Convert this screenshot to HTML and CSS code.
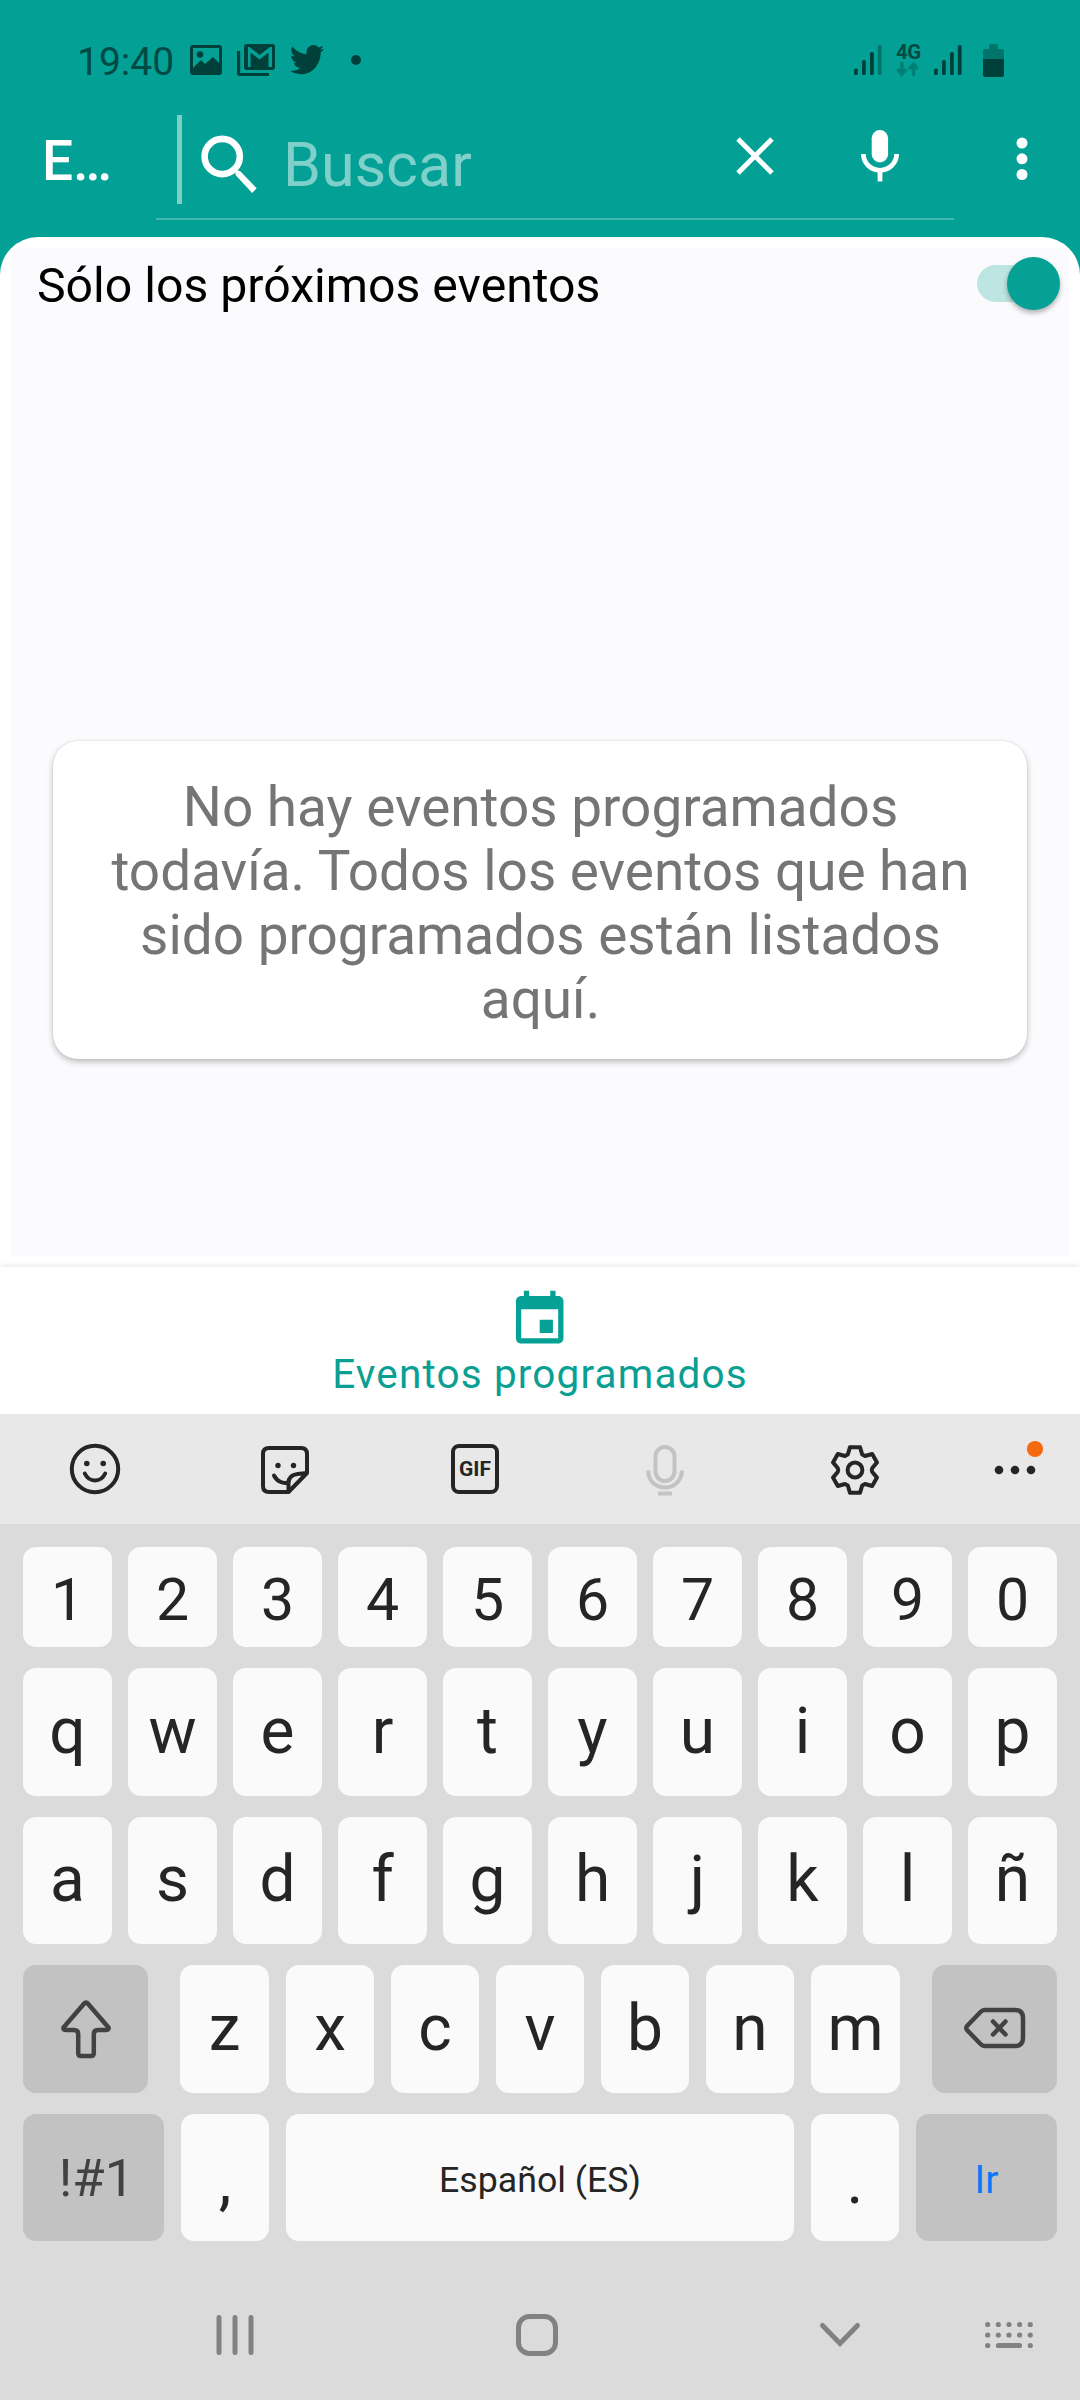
FILE: index.html
```html
<!DOCTYPE html>
<html lang="es">
<head>
<meta charset="utf-8">
<title>Eventos programados</title>
<link rel="stylesheet" href="styles.css">
</head>
<body>
<header class="header">
  <div class="status">
    <span class="clock">19:40</span>
    <svg class="st-image" width="32" height="30" viewBox="0 0 32 30"><path fill-rule="evenodd" d="M3 0h26a3 3 0 0 1 3 3v24a3 3 0 0 1-3 3H3a3 3 0 0 1-3-3V3a3 3 0 0 1 3-3zM3 3v20l8-8 4 4 8-7 6 6V3z"/><circle cx="10" cy="9.500" r="3.300"/></svg>
    <svg class="st-mail" width="38" height="32" viewBox="0 0 38 32"><path fill-rule="evenodd" d="M10 0h25a3 3 0 0 1 3 3v20a3 3 0 0 1-3 3H10a3 3 0 0 1-3-3V3a3 3 0 0 1 3-3zM11 3v20h2.500V8.500l9 7 9-7V23H35V3h-2l-10.500 8L12.500 3z"/><path d="M0 7h3.200v22H32v3H3a3 3 0 0 1-3-3z"/></svg>
    <svg class="st-bird" width="34" height="29" viewBox="0 2.800 24 19.500" preserveAspectRatio="none"><path d="M23.950 4.570a10 10 0 0 1-2.820.770 4.960 4.960 0 0 0 2.160-2.720c-.950.550-2 .960-3.130 1.180a4.920 4.920 0 0 0-8.380 4.480C7.690 8.100 4.070 6.130 1.640 3.160a4.920 4.920 0 0 0 1.520 6.570 4.900 4.900 0 0 1-2.230-.610v.060a4.920 4.920 0 0 0 3.950 4.830 5 5 0 0 1-2.210.080 4.940 4.940 0 0 0 4.600 3.420A9.870 9.870 0 0 1 0 19.540a14 14 0 0 0 7.550 2.210c9.050 0 14-7.500 14-13.980 0-.210 0-.420-.020-.630a9.900 9.900 0 0 0 2.460-2.550z"/></svg>
    <svg class="st-dot" width="10" height="10"><circle cx="5" cy="5" r="5"/></svg>
    <span class="spacer"></span>
    <svg class="st-signal" width="28" height="30" viewBox="0 0 28 30"><rect y="23.500" width="3.800" height="6.500" rx="1.500"/><rect x="8" y="15" width="3.800" height="15" rx="1.500"/><rect x="16" y="7" width="3.800" height="23" rx="1.500"/><rect class="faint" x="23.800" width="3.800" height="30" rx="1.500"/></svg>
    <span class="network"><b>4G</b><svg width="24" height="15" viewBox="0 0 24 15"><path d="M5.800 0v11M1.500 7l4.300 5.300L10.100 7M17.500 14V2.500M13.200 7l4.300-5 4.300 5" fill="none" stroke-width="3.400"/></svg></span>
    <svg class="st-signal2" width="28" height="30" viewBox="0 0 28 30"><rect y="23.500" width="3.800" height="6.500" rx="1.500"/><rect x="8" y="15" width="3.800" height="15" rx="1.500"/><rect x="16" y="7" width="3.800" height="23" rx="1.500"/><rect x="23.800" width="3.800" height="30" rx="1.500"/></svg>
    <svg class="st-battery" width="21" height="33" viewBox="0 0 21 33"><path class="faint" d="M6 5V2q0-2 2-2h5q2 0 2 2v3h4q2 0 2 2v8H0V7q0-2 2-2z"/><path d="M0 15h21v16q0 2-2 2H2q-2 0-2-2z"/></svg>
  </div>
  <div class="appbar">
    <h1 class="title">E…</h1>
    <div class="search">
      <span class="divider"></span>
      <svg class="magnifier" width="57" height="58" viewBox="0 0 57 58"><circle cx="21.200" cy="21.500" r="17.600" fill="none" stroke="#fff" stroke-width="6.600"/><path d="M34.500 37.500v-2.200L39 36l16.700 17.300-4.500 4.600L34.500 40z" fill="#fff"/></svg>
      <span class="placeholder">Buscar</span>
      <svg class="clear" width="38" height="38" viewBox="0 0 38 38"><path d="M2 2l34 34M36 2L2 36" stroke="#fff" stroke-width="5"/></svg>
      <svg class="voice" width="38" height="52" viewBox="0 0 38 52"><rect x="10.700" y="0" width="16.400" height="32.500" rx="8.200" fill="#fff"/><path d="M2.400 24a16.500 16.200 0 0 0 33.200 0M19 39v12.500" fill="none" stroke="#fff" stroke-width="4.800"/></svg>
    </div>
    <svg class="overflow" width="12" height="44"><circle cx="6" cy="6" r="5.500" fill="#fff"/><circle cx="6" cy="21.800" r="5.500" fill="#fff"/><circle cx="6" cy="37.500" r="5.500" fill="#fff"/></svg>
  </div>
</header>
<main class="sheet">
  <div class="content">
    <div class="filter"><span>Sólo los próximos eventos</span><span class="switch"><i class="thumb"></i></span></div>
    <p class="card">No hay eventos programados todavía. Todos los eventos que han sido programados están listados aquí.</p>
  </div>
</main>
<nav class="tab">
  <svg width="63.400" height="63.400" viewBox="0 0 24 24" fill="#05a195"><path d="M17 12h-5v5h5v-5zM16 1v2H8V1H6v2H5c-1.110 0-1.990.9-1.990 2L3 19c0 1.100.890 2 2 2h14c1.100 0 2-.9 2-2V5c0-1.100-.9-2-2-2h-1V1h-2zm3 18H5V8h14v11z"/></svg>
  <span>Eventos programados</span>
</nav>
<section class="keyboard">
  <div class="tools">
    <svg width="52" height="52" viewBox="-26 -26 52 52"><g class="ln"><circle r="23.200"/><path d="M-10.200 4.500c4.500 9.300 15.900 9.300 20.400 0"/></g><circle cx="-8.200" cy="-5.500" r="2.800"/><circle cx="8.200" cy="-5.500" r="2.800"/></svg>
    <svg width="52" height="52" viewBox="0 0 52 52"><path class="ln" d="M29.500 48H10q-6 0-6-6V10q0-6 6-6h32q6 0 6 6v19L29.500 48V39q0-8 9-9l9.500-1M15 31.500c3 6 9 8.500 14 7"/><circle cx="19" cy="21.500" r="2.700"/><circle cx="34.500" cy="21.500" r="2.700"/></svg>
    <span class="gif">GIF</span>
    <svg width="52" height="52" viewBox="0 0 52 52"><g class="muted"><rect x="16.500" y="3" width="19" height="34" rx="9.500"/><path d="M9.200 26.500c0 22.500 33.600 22.500 33.600 0M19 49.500h14"/></g></svg>
    <svg width="52" height="52" viewBox="-26 -26 52 52"><path class="ln" d="M-5 -22.800H5L7.200 -15.500L10 -14L17.200 -16L22 -7.600L17.300 -2Q16.200 0 17.300 2L22 7.600L17.200 16L10 14L7.200 15.500L5 22.800H-5L-7.200 15.500L-10 14L-17.200 16L-22 7.600L-17.300 2Q-16.200 0 -17.300 -2L-22 -7.600L-17.200 -16L-10 -14L-7.200 -15.500Z"/><circle class="ln" r="7.400"/></svg>
    <svg class="more" width="52" height="52" viewBox="0 0 52 52"><circle cx="10" cy="26" r="4.300"/><circle cx="26" cy="26" r="4.300"/><circle cx="42" cy="26" r="4.300"/><circle cx="46" cy="5" r="8.100" fill="#f56a0f"/></svg>
  </div>
  <div class="keys">
    <div class="row digits"><b>1</b><b>2</b><b>3</b><b>4</b><b>5</b><b>6</b><b>7</b><b>8</b><b>9</b><b>0</b></div>
    <div class="row"><b>q</b><b>w</b><b>e</b><b>r</b><b>t</b><b>y</b><b>u</b><b>i</b><b>o</b><b>p</b></div>
    <div class="row"><b>a</b><b>s</b><b>d</b><b>f</b><b>g</b><b>h</b><b>j</b><b>k</b><b>l</b><b>ñ</b></div>
    <div class="row shift-row">
      <b class="dark shift"><svg width="52" height="60" viewBox="0 0 52 60"><path class="kl" d="M26 3.500Q27 3.500 28 4.700L48.500 28.500Q49 31 46.500 31H38Q33.800 31 33.800 35V54Q33.800 57 31 57H21Q18.200 57 18.200 54V35Q18.200 31 14 31H5.500Q3 31 3.500 28.500L24 4.700Q25 3.500 26 3.500Z"/></svg></b>
      <b>z</b><b>x</b><b>c</b><b>v</b><b>b</b><b>n</b><b>m</b>
      <b class="dark erase"><svg width="62" height="42" viewBox="0 0 62 42"><path class="kl" d="M20.500 3H51Q59 3 59 11V31Q59 39 51 39H20.500Q18.500 39 16.500 37L3 23Q1.500 21 3 19L16.500 5Q18.500 3 20.500 3ZM29 14.500L41.500 27.500M41.500 14.500L29 27.500"/></svg></b>
    </div>
    <div class="row bottom-row"><b class="dark sym">!#1</b><b class="punct">,</b><b class="space">Español (ES)</b><b class="punct">.</b><b class="dark go">Ir</b></div>
  </div>
  <div class="sysnav">
    <svg width="40" height="42" viewBox="0 0 40 42"><path d="M4 3.500v35M20 3.500v35M36 3.500v35" stroke="#828282" stroke-width="5" stroke-linecap="round"/></svg>
    <svg width="44" height="44" viewBox="0 0 44 44"><rect x="3.500" y="3.500" width="37" height="37" rx="11" fill="none" stroke="#828282" stroke-width="5"/></svg>
    <svg width="42" height="26" viewBox="0 0 42 26"><path d="M3.500 3.500L21 21.500 38.500 3.500" fill="none" stroke="#828282" stroke-width="5" stroke-linecap="round"/></svg>
    <svg width="50" height="28" viewBox="0 0 50 28"><path d="M3.700 3.500h42.600M3.700 14h42.600" stroke="#828282" stroke-width="5.200" stroke-linecap="round" stroke-dasharray="0 10.640"/><path d="M3.700 24.500h0M14.500 24.500h21M46.300 24.500h0" stroke="#828282" stroke-width="5.200" stroke-linecap="round"/></svg>
  </div>
</section>
</body>
</html>
```
FILE: styles.css
```css
* { box-sizing: border-box; }
body {
  margin: 0;
  width: 1080px;
  height: 2400px;
  overflow: hidden;
  background: #03a095;
  font-family: Roboto, "Liberation Sans", sans-serif;
}
svg { display: block; flex: none; overflow: visible; }

/* Status bar and search bar */
.header { height: 237px; }
.status {
  display: flex;
  align-items: center;
  height: 101px;
  padding: 19px 76px 0 77px;
  fill: #00403b;
  color: #004a44;
}
.clock { width: 113px; font-size: 39px; line-height: 44px; padding-top: 4px; white-space: nowrap; }
.st-mail { margin-left: 15px; }
.st-bird { margin-left: 15px; }
.st-dot { margin-left: 27px; }
.spacer { flex: 1; }
.faint { fill: #00756b; }
.st-signal { margin-right: 14px; }
.network {
  width: 24px;
  margin-right: 14px;
  stroke: #007f75;
}
.network b { display: block; height: 19px; font-size: 20.500px; line-height: 18px; stroke: none; letter-spacing: -0.500px; }
.st-signal2 { margin-right: 21px; }

.appbar { display: flex; height: 119px; align-items: center; }
.title {
  width: 110px;
  margin: 1px 0 0 42px;
  font-size: 55px;
  line-height: 64px;
  font-weight: 500;
  color: #fff;
}
.search {
  display: flex;
  align-items: center;
  width: 798px;
  height: 119px;
  margin-left: 4px;
  padding-left: 21px;
  border-bottom: 2px solid #45b8af;
}
.divider { width: 5px; height: 89px; background: #7fcec8; }
.magnifier { margin: 9px 0 0 19px; }
.placeholder {
  width: 453px;
  margin-left: 25px;
  padding-top: 11px;
  font-size: 61px;
  line-height: 72px;
  color: #7fd0ca;
}
.clear { margin: -7px 0 0 0; }
.voice { margin: -8px 0 0 87px; }
.overflow { margin: -3px 0 0 62px; }

/* Event list */
.sheet {
  height: 1030px;
  padding: 11px;
  background: #fff;
  border-radius: 38px 38px 0 0;
}
.content { height: 1008px; padding: 0 9px 0 26px; background: #fbfbfe; }
.filter {
  display: flex;
  justify-content: space-between;
  align-items: center;
  height: 71px;
  font-size: 48.200px;
  line-height: 56px;
  color: #000;
}
.filter span:first-child { padding-top: 4px; }
.switch {
  display: flex;
  width: 83px;
  height: 37px;
  align-items: center;
  justify-content: flex-end;
  border-radius: 19px;
  background: linear-gradient(90deg, #bde5e2 70%, transparent 70%);
}
.thumb {
  width: 53px;
  height: 53px;
  flex: none;
  border-radius: 50%;
  background: #05a195;
  box-shadow: 0 3px 5px rgba(0,0,0,.3);
}
.card {
  width: 974px;
  height: 318px;
  margin: 422px 0 0 16px;
  padding: 34px 39px 0 40px;
  border-radius: 25px;
  background: #fff;
  box-shadow: 0 3px 6px rgba(0,0,0,.24), 0 0 2px rgba(0,0,0,.12);
  font-size: 54.900px;
  line-height: 64px;
  text-align: center;
  color: #757575;
}
.tab {
  position: relative;
  display: flex;
  flex-direction: column;
  align-items: center;
  height: 147px;
  padding-top: 21px;
  background: #fff;
  box-shadow: 0 -1px 5px rgba(0,0,0,.1);
  font-size: 40.500px;
  line-height: 46px;
  letter-spacing: 1.150px;
  color: #0b9f93;
}

/* On-screen keyboard */
.keyboard { height: 986px; background: #dbdbdb; color: #252525; position: relative; }
.tools {
  display: flex;
  gap: 138px;
  height: 110px;
  padding: 30px 0 0 69px;
  background: #e8e8e8;
  fill: #252525;
}
.tools svg:first-child { margin-top: -1px; }
.tools .more { margin-left: -30px; }
.ln { fill: none; stroke: #252525; stroke-width: 4; stroke-linejoin: round; stroke-linecap: round; }
.muted { fill: none; stroke: #c3c3c3; stroke-width: 4; }
.gif {
  width: 48px;
  height: 50px;
  margin: 0 2px;
  border: 4px solid #252525;
  border-radius: 8px;
  font-size: 21px;
  font-weight: 700;
  line-height: 43px;
  text-align: center;
}
.keys { display: grid; gap: 21px; padding: 23px 23px 0; }
.row {
  display: grid;
  grid-template-columns: repeat(10, 89px);
  justify-content: space-between;
  height: 128px;
  font-size: 64px;
}
.row:nth-child(3), .row:nth-child(5) { height: 127px; }
.row b {
  display: flex;
  align-items: center;
  justify-content: center;
  padding-bottom: 2px;
  border-radius: 13px;
  background: #fafafa;
  font-weight: 400;
}
.row.digits { height: 100px; font-size: 59px; }
.digits b { padding: 5px 0 0; }
.shift-row { grid-template-columns: 125px 89px repeat(5, 88px) 89px 125px; justify-content: start; column-gap: 17px; }
.shift-row b { margin: 0 -15px 0 15px; }
.shift-row .shift { margin: 0; padding-bottom: 0; }
.shift-row .erase { margin: 0 -30px 0 30px; }
.row b.dark { background: #c2c2c2; color: #424242; }
.kl { fill: none; stroke: #424242; stroke-width: 4.500; stroke-linejoin: round; stroke-linecap: round; }
.bottom-row { grid-template-columns: 141px 88px 508px 88px 141px; }
.bottom-row .sym { font-size: 52.500px; padding: 0 0 0 6px; }
.bottom-row .punct { padding: 7px 0 0; }
.bottom-row .space { font-size: 35.700px; padding: 4px 0 0; }
.bottom-row b.go { font-size: 39px; padding: 5px 0 0; color: #0a78f5; }
.sysnav { display: flex; align-items: center; height: 159px; padding: 29px 0 0 215px; }
.sysnav svg:nth-child(2) { margin-left: 260px; }
.sysnav svg:nth-child(3) { margin-left: 260px; }
.sysnav svg:nth-child(4) { margin-left: 123px; }
```
